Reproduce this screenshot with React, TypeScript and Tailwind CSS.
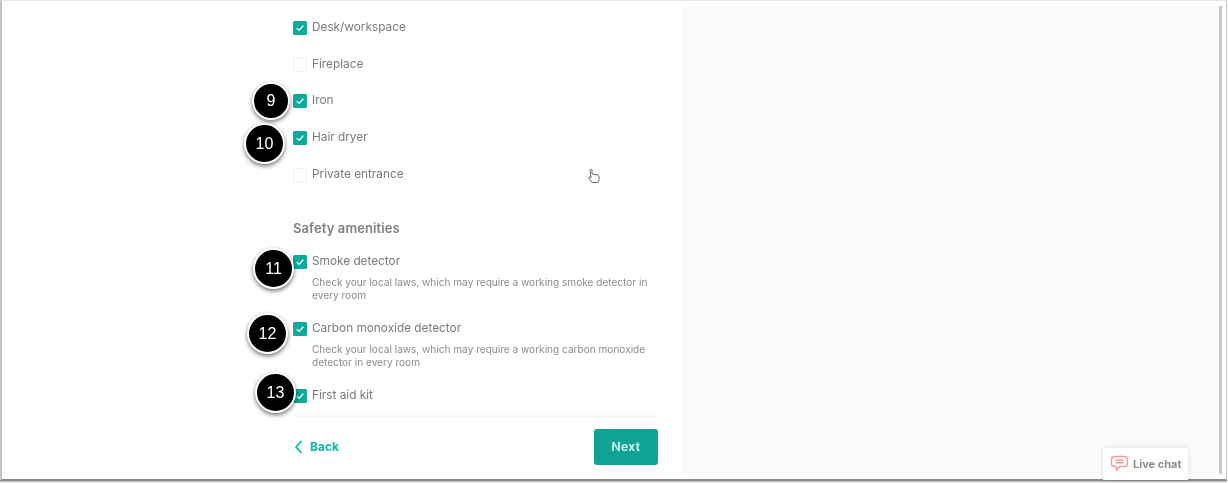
import React from "react";

const font = { fontFamily: '"Inter", "Open Sans", sans-serif' };

function Box({ on = true }: { on?: boolean }) {
  return on ? (
    <span className="flex h-[14px] w-[14px] shrink-0 items-center justify-center rounded-[1.5px] bg-[#0fa99a]">
      <svg width="10" height="10" viewBox="0 0 10 10" fill="none" stroke="#e9fffb" strokeWidth="1.3" strokeLinecap="round" strokeLinejoin="round">
        <path d="M2 5.400 4.100 7.400 8 3" />
      </svg>
    </span>
  ) : (
    <span className="h-[14px] w-[14px] shrink-0 rounded-[1.5px] border border-[#f0f0f0] bg-white" />
  );
}

function Row({ label, on = true, h, desc }: { label: string; on?: boolean; h: string; desc?: React.ReactNode }) {
  return (
    <div className={h}>
      <div className="flex h-[14px] items-center gap-[5px]">
        <Box on={on} />
        <span className="text-[11.8px] leading-none text-[#7a7a7a]">{label}</span>
      </div>
      {desc && <p className="mt-[6.5px] pl-[19px] text-[10.08px] leading-[13.5px] text-[#8c8c8c]">{desc}</p>}
    </div>
  );
}

function Badge({ n, className }: { n: number; className: string }) {
  return (
    <div className={"absolute flex items-center justify-center rounded-full border-2 border-white bg-black text-[16px] text-white shadow-[0_2px_4px_rgba(0,0,0,0.55)] blur-[0.2px] " + className} style={{ fontFamily: '"Liberation Sans", sans-serif' }}>
      {n}
    </div>
  );
}

export default function App() {
  return (
    <div className="relative h-[483px] w-[1228px] overflow-hidden bg-white" style={font}>
      <div className="flex h-[481px] w-[1227px] border-b-2 border-l-2 border-t border-r border-b-[#8a8a8a] border-l-[#c4c4c4] border-r-[#c9c9c9] border-t-[#e6e6e6] shadow-[0_1px_1px_rgba(0,0,0,0.25)]">
        <div className="flex w-[679px] shrink-0 flex-col pl-[291px] pr-[23px] pt-[20px] blur-[0.35px]">
          <div className="h-[397px]">
            <Row label="Desk/workspace" h="h-[36.6px]" />
            <Row label="Fireplace" on={false} h="h-[36.8px]" />
            <Row label="Iron" h="h-[36.8px]" />
            <Row label="Hair dryer" h="h-[36.6px]" />
            <Row label="Private entrance" on={false} h="h-[51.5px]" />
            <h3 className="h-[36px] pt-[1px] text-[13px] font-semibold leading-[16px] tracking-[0.1px] text-[#808080]">Safety amenities</h3>
            <Row label="Smoke detector" h="h-[67px]" desc={<>Check your local laws, which may require a working smoke detector in<br />every room</>} />
            <Row label="Carbon monoxide detector" h="h-[67px]" desc={<>Check your local laws, which may require a working carbon monoxide<br />detector in every room</>} />
            <Row label="First aid kit" h="h-[18px]" />
          </div>
          <div className="flex h-[63px] items-start justify-between border-t border-t-[#f7f7f7] pt-[12px] shadow-[0_-2px_3px_rgba(0,0,0,0.025)]">
            <div className="flex h-[36px] items-center gap-[7px] pl-[1px]">
              <svg width="9" height="14" viewBox="0 0 9 14" fill="none" stroke="#08b8a8" strokeWidth="1.8" strokeLinecap="round" strokeLinejoin="round">
                <path d="M7 1.500 2 7l5 5.500" />
              </svg>
              <span className="text-[12px] font-bold text-[#0cb8a8]">Back</span>
            </div>
            <div className="flex h-[36px] w-[64px] items-center justify-center rounded-[3px] bg-[#0ea394] text-[12px] font-semibold tracking-[0.4px] text-[#d8fdf7]">Next</div>
          </div>
        </div>
        <div className="mb-[5px] mr-[4px] mt-[5px] flex-1 border-r-[3px] border-r-[#c8c8c8] bg-[#fafafa]" />
      </div>

      <Badge n={9} className="left-[252px] top-[82px] h-[38px] w-[38px]" />
      <Badge n={10} className="left-[244px] top-[123px] h-[41px] w-[41px]" />
      <Badge n={11} className="left-[253px] top-[248px] h-[41px] w-[41px]" />
      <Badge n={12} className="left-[247px] top-[313px] h-[41px] w-[41px]" />
      <Badge n={13} className="left-[255px] top-[372px] h-[41px] w-[41px]" />

      <svg className="absolute left-[587px] top-[168px] blur-[0.4px]" width="14" height="17" viewBox="0 0 14 17" fill="#fff" stroke="#666" strokeWidth="1" strokeLinejoin="round">
        <path d="M3 2.200c0-1.300 2-1.300 2 0V6l5 .8c1.300.3 2 1 2 2.200v2.500c0 1.300-.5 2-1 3H5L2 10.500c-.8-1.200.5-2 1.600-1L4 10 3 2.200Z" />
      </svg>

      <div className="absolute left-[1103px] top-[448px] flex h-[32px] w-[85px] items-start gap-[4px] rounded-t-[3px] bg-white pl-[7px] pt-[7px] shadow-[0_0_5px_rgba(0,0,0,0.12)] blur-[0.3px]">
        <svg width="19" height="18" viewBox="0 0 19 18" fill="none" stroke="#f59a9a" strokeWidth="1.4" strokeLinejoin="round" strokeLinecap="round">
          <path d="M5 1.500h9c2 0 3.500 1.400 3.500 3.200v3.600c0 1.800-1.500 3.200-3.500 3.200H9.500L6.500 15.500v-4H5c-2 0-3.500-1.400-3.500-3.200V4.700c0-1.800 1.500-3.200 3.500-3.200Z" />
          <path d="M6 5.200h7M6 7.800h7" />
        </svg>
        <span className="text-[11px] font-bold leading-[18px] text-[#8a8a8a]">Live chat</span>
      </div>
    </div>
  );
}
